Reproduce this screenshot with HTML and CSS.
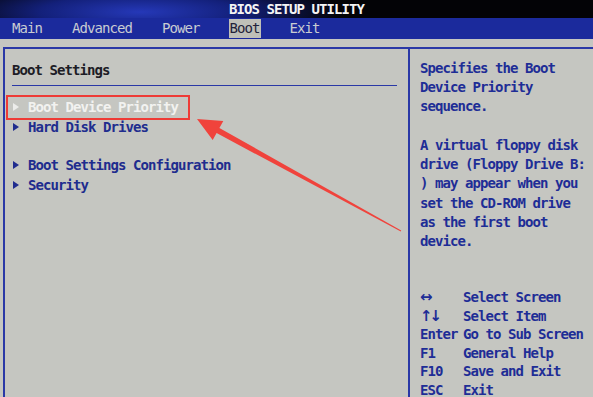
FILE: index.html
```html
<!DOCTYPE html>
<html lang="en">
<head>
    <meta charset="UTF-8">
    <meta name="viewport" content="width=device-width, initial-scale=1.0">
    <title>BIOS Setup Utility</title>
    <link rel="stylesheet" href="styles.css">
</head>
<body>

    <div class="bios">
        <!-- Cabecera -->
        <header class="titulo">BIOS SETUP UTILITY</header>

        <nav class="pestanas">
            <span>Main</span>
            <span>Advanced</span>
            <span>Power</span>
            <span class="activa">Boot</span>
            <span>Exit</span>
        </nav>

        <div class="marco">
            <!-- Menu izquierdo -->
            <section class="menu">
                <h2 class="menu-titulo">Boot Settings</h2>
                <ul class="opciones">
                    <li class="opcion seleccionada"><i class="flecha"></i>Boot Device Priority</li>
                    <li class="opcion"><i class="flecha"></i>Hard Disk Drives</li>
                    <li class="opcion separada"><i class="flecha"></i>Boot Settings Configuration</li>
                    <li class="opcion"><i class="flecha"></i>Security</li>
                </ul>
            </section>

            <!-- Ayuda -->
            <aside class="ayuda">
                <p>Specifies the Boot<br>Device Priority<br>sequence.</p>
                <p>A virtual floppy disk<br>drive (Floppy Drive B:<br>) may appear when you<br>set the CD-ROM drive<br>as the first boot<br>device.</p>

                <dl class="teclas">
                    <dt class="simbolo">&#8596;</dt><dd>Select Screen</dd>
                    <dt class="simbolo">&#8593;&#8595;</dt><dd>Select Item</dd>
                    <dt>Enter</dt><dd>Go to Sub Screen</dd>
                    <dt>F1</dt><dd>General Help</dd>
                    <dt>F10</dt><dd>Save and Exit</dd>
                    <dt>ESC</dt><dd>Exit</dd>
                </dl>
            </aside>
        </div>

        <svg class="anotacion" width="593" height="397" viewBox="0 0 593 397">
            <polygon points="197,119 223.3,120.9 219.4,127.9 401.2,230.6 400.8,231.4 216.6,133.1 212.7,140.1" fill="#f0433c"/>
        </svg>
    </div>

</body>
</html>
```

FILE: styles.css
```css
body {
    margin: 0;
    background-color: #c5c6c1;
    font-family: 'DejaVu Sans Mono', 'Liberation Mono', monospace;
    font-size: 14px;
    font-weight: bold;
    letter-spacing: -0.93px;
}

.bios {
    position: relative;
    width: 593px;
    height: 397px;
    overflow: hidden;
    display: flex;
    flex-direction: column;
    background-color: #c5c6c1;
}

.titulo {
    height: 18px;
    line-height: 18px;
    text-align: center;
    color: #f4f4f4;
    background: radial-gradient(ellipse 200px 34px at 140px 12px, #2538b8 0%, #13207a 50%, rgba(0, 0, 0, 0) 100%), #030306;
}

.pestanas {
    height: 21px;
    display: flex;
    align-items: center;
    gap: 30px;
    padding-left: 12px;
    background-color: #1b2a9c;
    color: #c9ccd2;
    font-weight: normal;
}

.pestanas span {
    line-height: 19px;
}

.pestanas .activa {
    margin: 0 -1px;
    padding: 0 1px;
    background-color: #bfc0b8;
    color: #22233a;
}

.marco {
    flex: 1;
    margin-top: 8px;
    margin-left: 3px;
    border-top: 2px solid #2a38a6;
    border-left: 2px solid #2a38a6;
    display: grid;
    grid-template-columns: 403px 1fr;
    min-height: 0;
}

.menu {
    padding-top: 11.5px;
}

.menu-titulo {
    margin: 0 11px 0 7px;
    padding-bottom: 5.5px;
    font-size: 14px;
    line-height: 19px;
    color: #1d1d26;
    border-bottom: 1.5px solid #2a38a6;
}

.opciones {
    list-style: none;
    margin: 10.5px 0 0 0;
    padding-left: 8px;
}

.opcion {
    display: flex;
    align-items: center;
    width: fit-content;
    line-height: 20.5px;
    color: #202c8e;
}

.separada {
    margin-top: 17px;
}

.flecha {
    width: 15px;
    height: 8px;
    flex-shrink: 0;
}

.flecha::before {
    content: "";
    display: block;
    width: 0;
    height: 0;
    border-top: 4px solid transparent;
    border-bottom: 4px solid transparent;
    border-left: 6px solid #202c8e;
}

.seleccionada {
    position: relative;
    color: #f2f2f0;
}

.seleccionada .flecha::before {
    border-left-color: #ececea;
}

.seleccionada::after {
    content: "";
    position: absolute;
    top: -1.5px;
    bottom: -2.5px;
    left: -7px;
    right: -12px;
    border: 2.5px solid #ee3b36;
}

.ayuda {
    display: flex;
    flex-direction: column;
    border-left: 2px solid #2a38a6;
    padding: 9.5px 0 0 10px;
    color: #1e2d96;
    line-height: 19.3px;
}

.ayuda p {
    margin: 0 0 19.3px 0;
}

.teclas {
    display: grid;
    grid-template-columns: 43px 1fr;
    margin: auto 0 -2.5px 0;
    line-height: 18.6px;
}

.teclas dt,
.teclas dd {
    margin: 0;
}

.teclas .simbolo {
    font-family: 'DejaVu Sans', sans-serif;
    font-size: 15px;
    letter-spacing: -3px;
}

.anotacion {
    position: absolute;
    top: 0;
    left: 0;
    pointer-events: none;
}
```
